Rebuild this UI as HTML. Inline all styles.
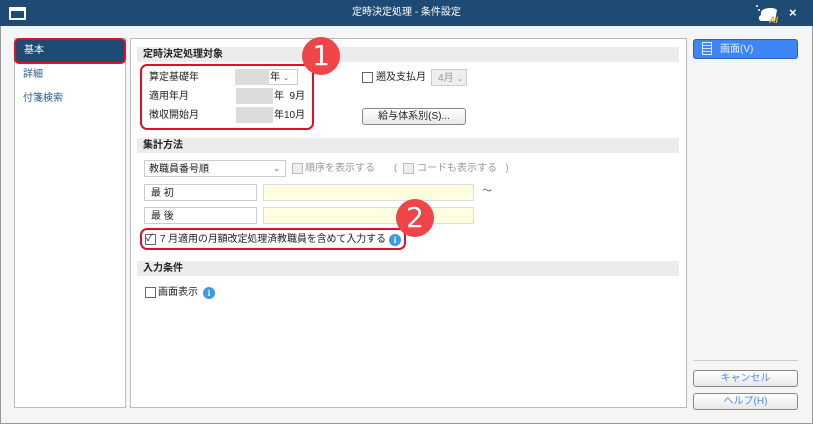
<!DOCTYPE html><html><head><meta charset="utf-8"><style>
*{box-sizing:border-box;margin:0;padding:0}
body{width:813px;height:424px;overflow:hidden;background:#f5f5f5;font-family:"Liberation Sans","Noto Sans CJK JP",sans-serif;font-size:10px;line-height:12px;color:#222;position:relative}
.a{position:absolute}
.t{white-space:nowrap}
.sec{position:absolute;left:137px;width:542px;height:15px;background:#ececec;font-weight:bold;font-size:10px;padding-left:6px;line-height:15px}
.gray{background:#dcdcdc}
.cb{position:absolute;width:11px;height:11px;border:1px solid #666;background:#fff}
.btn{position:absolute;border:1px solid #888;border-radius:3px;background:linear-gradient(#fff,#e8e8e8);text-align:center;font-size:10px;line-height:15px}
.red{position:absolute;border:2.5px solid #e0102a;border-radius:7px}
.num{position:absolute;width:38px;height:38px;border-radius:50%;background:#ef4448;color:#fff;font-size:28px;text-align:center;line-height:38px;font-family:"DejaVu Sans",sans-serif}
.info{position:absolute;width:12px;height:12px;border-radius:50%;background:#3b9be0;color:#fff;font-size:9px;font-weight:bold;text-align:center;line-height:12px;font-family:"Liberation Serif",serif}
</style></head><body>
<div class="a" style="left:0;top:0;width:813px;height:26px;background:#1e4b74"></div>
<div class="a" style="left:9px;top:7px;width:17px;height:13px;border:2px solid #fff;border-top-width:4px"></div>
<div class="a t" style="left:0;width:813px;top:7px;text-align:center;color:#fff;font-size:10px">定時決定処理 - 条件設定</div>
<svg class="a" style="left:753px;top:3px" width="30" height="22"><path d="M8 9 C10 4 22 4 24 7 L22 18 L9 18 C5 18 5 13 8 12Z" fill="#fff"/><circle cx="4" cy="3" r="1" fill="#fff"/><circle cx="6" cy="7" r="1" fill="#fff"/><text x="16" y="20" font-size="9" font-weight="bold" font-style="italic" fill="#e8b020" font-family="Liberation Sans">AI</text></svg>
<div class="a t" style="left:789px;top:7px;color:#fff;font-size:13px;font-weight:bold">×</div>
<div class="a" style="left:0;top:26px;width:813px;height:398px;border:1px solid #999;border-top:0;background:#f5f5f5"></div>

<div class="a" style="left:14px;top:38px;width:112px;height:370px;background:#fff;border:1px solid #bbb"></div>
<div class="a" style="left:14px;top:38px;width:112px;height:26px;background:#1e4b74;border:2.5px solid #e0102a;border-radius:5px;color:#fff;padding:5px 0 0 8px">基本</div>
<div class="a t" style="left:23px;top:69px;color:#2b5d8f">詳細</div>
<div class="a t" style="left:23px;top:93px;color:#2b5d8f">付箋検索</div>

<div class="a" style="left:130px;top:38px;width:557px;height:370px;background:#fff;border:1px solid #bbb"></div>
<div class="sec" style="top:47px">定時決定処理対象</div>
<div class="a t" style="left:149px;top:72px">算定基礎年</div>
<div class="a t" style="left:149px;top:91px">適用年月</div>
<div class="a t" style="left:149px;top:110px">徴収開始月</div>
<div class="a gray" style="left:235px;top:69px;width:34px;height:16px"></div>
<div class="a" style="left:269px;top:69px;width:29px;height:16px;border:1px solid #ccc;border-left:0;padding:2px 0 0 1px">年 <span style="font-size:8px;color:#666">&#8964;</span></div>
<div class="a gray" style="left:236px;top:88px;width:37px;height:16px"></div>
<div class="a t" style="left:274px;top:91px">年&nbsp; 9月</div>
<div class="a gray" style="left:236px;top:107px;width:37px;height:16px"></div>
<div class="a t" style="left:274px;top:110px">年10月</div>
<div class="red" style="left:140px;top:64px;width:174px;height:66px"></div>
<div class="num" style="left:302px;top:37px">1</div>
<div class="cb" style="left:362px;top:72px"></div>
<div class="a t" style="left:376px;top:72px">遡及支払月</div>
<div class="a" style="left:431px;top:69px;width:36px;height:17px;border:1px solid #ccc;background:#eee;color:#999;padding:3px 0 0 6px">4月 <span style="font-size:8px">&#8964;</span></div>
<div class="btn" style="left:362px;top:108px;width:104px;height:17px">給与体系別(S)...</div>

<div class="sec" style="top:138px">集計方法</div>
<div class="a" style="left:144px;top:160px;width:142px;height:17px;border:1px solid #ccc;padding:3px 0 0 4px">教職員番号順<span style="position:absolute;right:5px;top:2px;font-size:8px;color:#666">&#8964;</span></div>
<div class="cb" style="left:292px;top:163px;border-color:#bbb;background:#eee"></div>
<div class="a t" style="left:305px;top:163px;color:#999">順序を表示する</div>
<div class="a t" style="left:394px;top:163px;color:#999">(</div>
<div class="cb" style="left:403px;top:163px;border-color:#bbb;background:#eee"></div>
<div class="a t" style="left:417px;top:163px;color:#999">コードも表示する&nbsp;&nbsp;&nbsp;)</div>
<div class="a" style="left:144px;top:184px;width:113px;height:17px;border:1px solid #ccc;padding:3px 0 0 6px">最 初</div>
<div class="a" style="left:263px;top:184px;width:211px;height:17px;border:1px solid #ddd;background:#ffffe0"></div>
<div class="a t" style="left:482px;top:186px;color:#555">～</div>
<div class="a" style="left:144px;top:207px;width:113px;height:17px;border:1px solid #ccc;padding:3px 0 0 6px">最 後</div>
<div class="a" style="left:263px;top:207px;width:211px;height:17px;border:1px solid #ddd;background:#ffffe0"></div>
<div class="cb" style="left:145px;top:234px"></div>
<div class="a t" style="left:146px;top:233px;font-size:10px">✓</div>
<div class="a t" style="left:160px;top:234px;letter-spacing:-0.1px">7 月適用の月額改定処理済教職員を含めて入力する</div>
<div class="info" style="left:389px;top:234px">i</div>
<div class="red" style="left:140px;top:228px;width:266px;height:22px"></div>
<div class="num" style="left:396px;top:199px">2</div>

<div class="sec" style="top:261px">入力条件</div>
<div class="cb" style="left:145px;top:287px"></div>
<div class="a t" style="left:158px;top:287px">画面表示</div>
<div class="info" style="left:203px;top:287px">i</div>

<div class="a" style="left:693px;top:39px;width:105px;height:20px;border:1px solid #2a5fc4;border-radius:3px;background:#3e86f5;color:#e8f0ff;padding:4px 0 0 26px">画面(V)</div>
<div class="a" style="left:702px;top:42px;width:10px;height:13px;border:1px solid #e0ecff;background:repeating-linear-gradient(#3e86f5 0 2px,#cfe0ff 2px 3px)"></div>
<div class="a" style="left:693px;top:360px;width:105px;height:1px;background:#ccc"></div>
<div class="btn" style="left:693px;top:370px;width:105px;height:17px;color:#4a8ff0">キャンセル</div>
<div class="btn" style="left:693px;top:393px;width:105px;height:17px;color:#4a8ff0">ヘルプ(H)</div>
</body></html>
